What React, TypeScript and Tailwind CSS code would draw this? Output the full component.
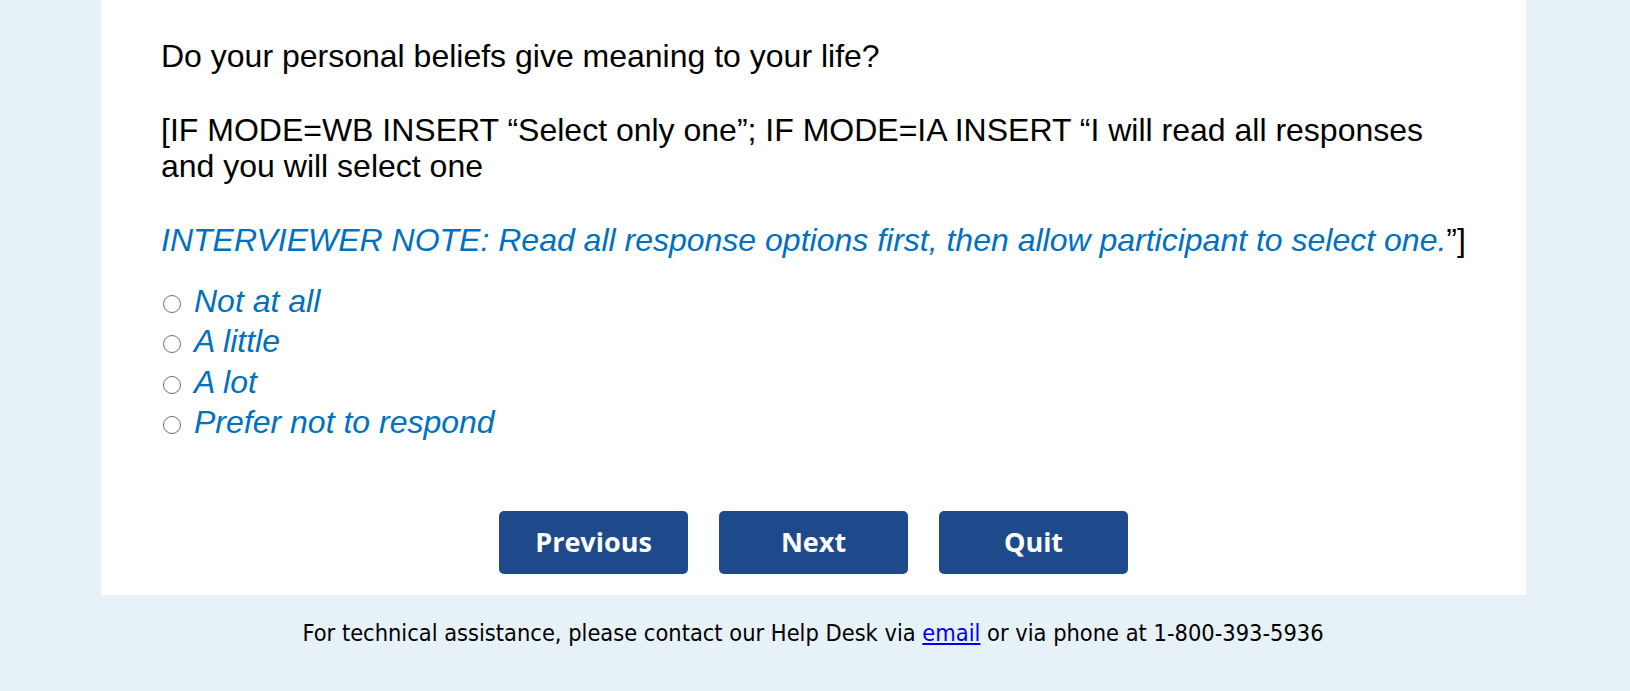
const options = ["Not at all", "A little", "A lot", "Prefer not to respond"];

export default function App() {
  return (
    <div className="min-h-[691px] w-full bg-[#e6f2f8]">
      <div className="ml-[101px] w-[1425px] bg-white px-[60px] pt-[38px] pb-[21px]">
        <div className="font-['Liberation_Sans',Arial,sans-serif] text-[32px] leading-[36.8px] text-black">
          <p>
            Do your personal beliefs give meaning to your life?
            <br />
            <br />
            [IF MODE=WB INSERT “Select only one”; IF MODE=IA INSERT “I will read all responses and you will select one
            <br />
            <br />
            <span className="italic text-[#0070c0]">
              INTERVIEWER NOTE: Read all response options first, then allow participant to select one.
            </span>
            ”]
          </p>

          <div className="mt-[22px] flex flex-col">
            {options.map((o) => (
              <label key={o} className="flex h-[40.5px] items-start gap-[13px]">
                <span className="mt-[14px] ml-[2px] h-[18px] w-[18px] shrink-0 rounded-full border-[1.5px] border-[#6e6e6e] bg-white"></span>
                <span className="italic leading-[40px] text-[#0070c0]">{o}</span>
              </label>
            ))}
          </div>
        </div>

        <div className="mt-[68px] flex justify-center gap-[31px]">
          {["Previous", "Next", "Quit"].map((b) => (
            <button
              key={b}
              className="flex h-[63px] w-[189px] items-center justify-center rounded-[5px] bg-[#1e4a8c] font-['Open_Sans',sans-serif] text-[27px] font-bold text-white"
            >
              {b}
            </button>
          ))}
        </div>
      </div>

      <div className="pt-[23px] pr-[4px] text-center font-['DejaVu_Sans_Condensed','DejaVu_Sans',sans-serif] text-[23.4px] leading-[30px] text-black">
        For technical assistance, please contact our Help Desk via{" "}
        <a href="#" className="text-[#0000ee] underline">
          email
        </a>{" "}
        or via phone at 1-800-393-5936
      </div>
    </div>
  );
}
